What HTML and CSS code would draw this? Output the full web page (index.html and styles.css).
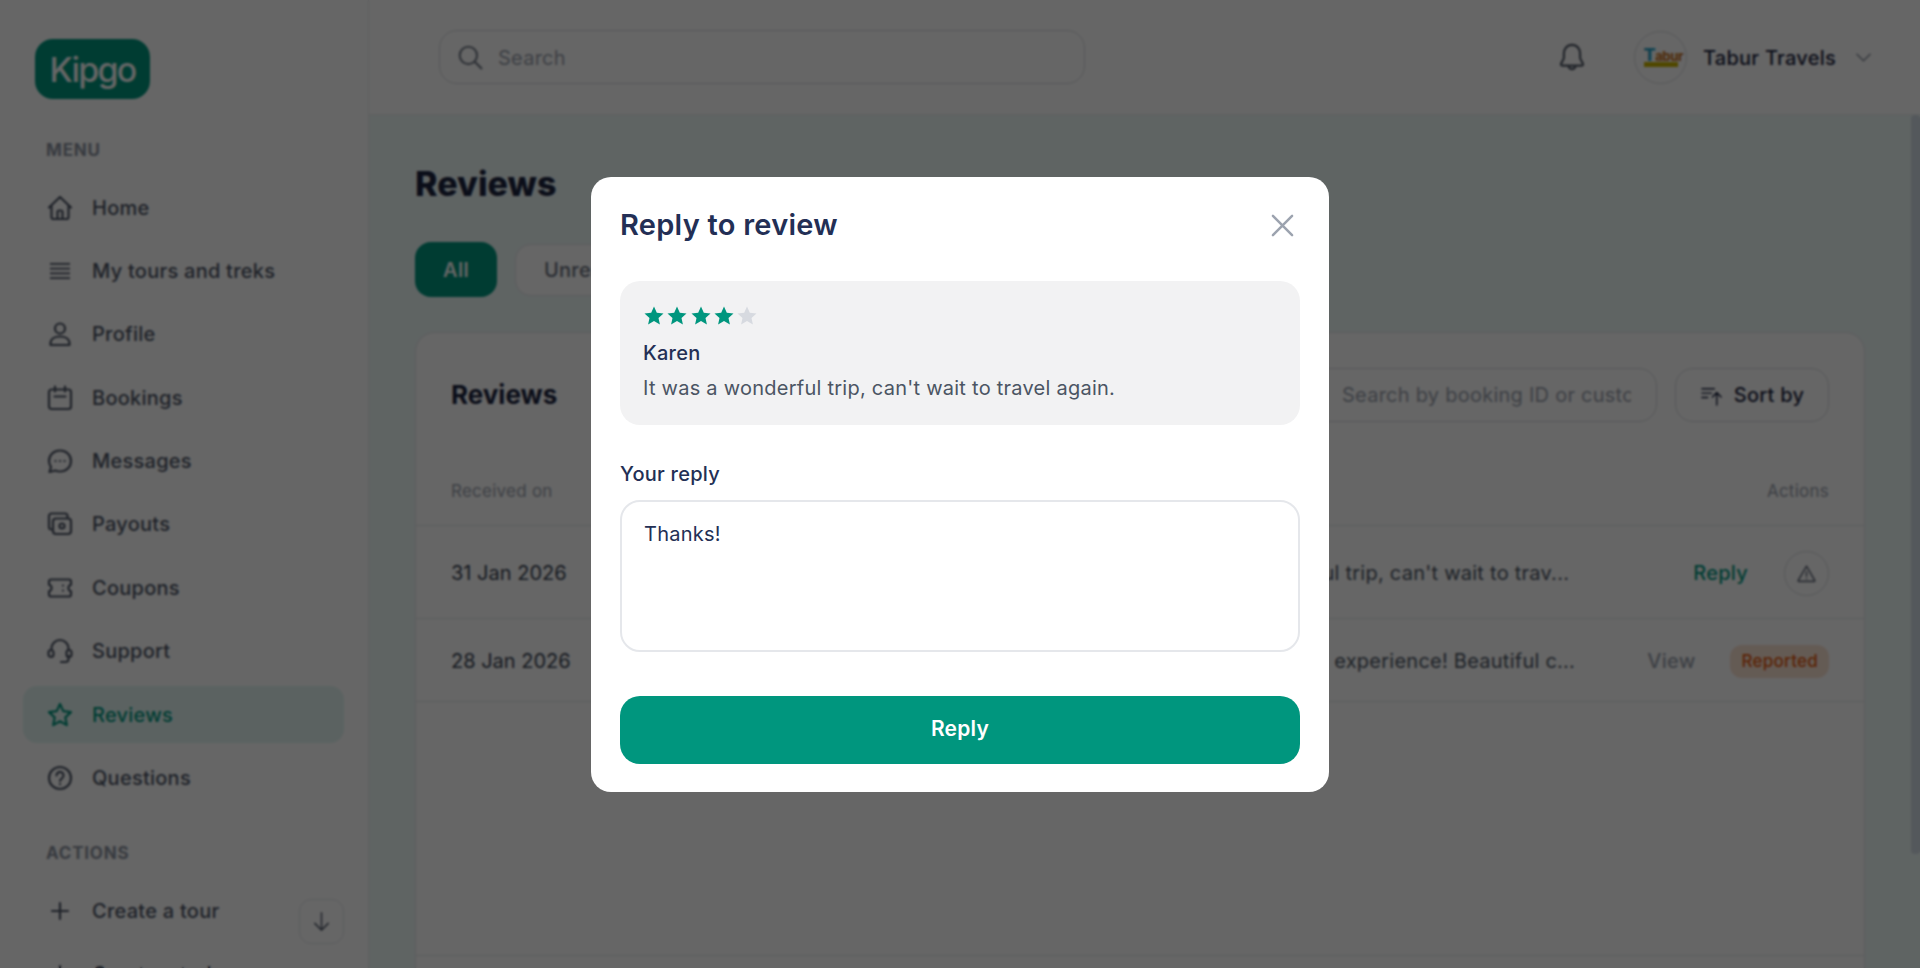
FILE: index.html
```html
<!DOCTYPE html>
<html lang="en">
<head>
  <meta charset="UTF-8" />
  <meta name="viewport" content="width=device-width, initial-scale=1.0"/>
  <title>Reviews</title>
  <link rel="stylesheet" href="styles.css">
</head>
<body>
  <aside class="sidebar">
    <div class="logo">Kipgo</div>

    <p class="rotulo rotulo-menu">MENU</p>
    <nav class="lista">
      <a class="item">
        <svg viewBox="0 0 26 26"><path d="M2 12.500 13 2l11 10.500M4.500 10.500V22a2 2 0 0 0 2 2h13a2 2 0 0 0 2-2V10.500M10.500 24v-7a1.500 1.500 0 0 1 1.500-1.500h2a1.500 1.500 0 0 1 1.500 1.500v7"/></svg>
        Home
      </a>
      <a class="item">
        <svg class="fino" viewBox="0 0 26 26"><path d="M3 5.800h20M3 10.600h20M3 15.400h20M3 20.200h20"/></svg>
        My tours and treks
      </a>
      <a class="item">
        <svg viewBox="0 0 26 26"><circle cx="13" cy="7.500" r="5"/><path d="M3.500 24v-1.500c0-4.500 4-7 9.500-7s9.500 2.500 9.500 7V24z"/></svg>
        Profile
      </a>
      <a class="item">
        <svg viewBox="0 0 26 26"><rect x="2" y="4.500" width="22" height="19.500" rx="2.500"/><path d="M8 1.500v5M18 1.500v5M7.500 11.500h11"/></svg>
        Bookings
      </a>
      <a class="item">
        <svg viewBox="0 0 26 26"><path d="M13 2.500c6.200 0 11 4.500 11 10.500s-4.800 10.500-11 10.500c-1.700 0-3.300-.3-4.700-1L2.500 24l1.500-5A10.400 10.400 0 0 1 2 13C2 7 6.800 2.500 13 2.500z"/><path d="M8.500 13h.1M13 13h.1M17.500 13h.1"/></svg>
        Messages
      </a>
      <a class="item">
        <svg viewBox="0 0 26 26"><path d="M4.500 18.500A2.500 2.500 0 0 1 2 16V5a2.500 2.500 0 0 1 2.500-2.500H18A2.500 2.500 0 0 1 20.500 5v2"/><rect x="6" y="7.500" width="18" height="15.500" rx="3"/><circle cx="15" cy="15" r="2.500"/></svg>
        Payouts
      </a>
      <a class="item">
        <svg viewBox="0 0 26 26"><path d="M4 4.500h18a2 2 0 0 1 2 2v3.200a3.400 3.400 0 0 0 0 6.600v3.200a2 2 0 0 1-2 2H4a2 2 0 0 1-2-2v-3.200a3.400 3.400 0 0 0 0-6.600V6.500a2 2 0 0 1 2-2z"/><path d="M16 10.500v.1M16 15.500v.1"/></svg>
        Coupons
      </a>
      <a class="item">
        <svg viewBox="0 0 26 26"><path d="M4.500 12V10.500a8.500 8.500 0 0 1 17 0V12M21.500 18v3a3 3 0 0 1-3 3H14"/><rect x="1.500" y="12" width="5" height="7" rx="2.500"/><rect x="19.500" y="12" width="5" height="7" rx="2.500"/></svg>
        Support
      </a>
      <a class="item item-ativo">
        <svg viewBox="0 0 26 26"><path d="m13 2 3.300 7.100 7.700 1-5.700 5.300 1.500 7.700-6.800-3.800-6.800 3.800 1.500-7.700L2 10.100l7.700-1z"/></svg>
        Reviews
      </a>
      <a class="item">
        <svg viewBox="0 0 26 26"><circle cx="13" cy="13" r="11"/><path d="M9.500 10.500a3.500 3.500 0 1 1 5.500 2.800c-1.200.8-2 1.500-2 2.700M13 19.200h.1"/></svg>
        Questions
      </a>
    </nav>

    <p class="rotulo rotulo-acoes">ACTIONS</p>
    <nav class="lista">
      <a class="item">
        <svg viewBox="0 0 26 26"><path d="M13 5v16M5 13h16"/></svg>
        Create a tour
      </a>
      <a class="item">
        <svg viewBox="0 0 26 26"><path d="M13 5v16M5 13h16"/></svg>
        Create a trek
      </a>
    </nav>

    <button class="rolar">
      <svg viewBox="0 0 24 24"><path d="M12 3v18M5 14l7 7 7-7"/></svg>
    </button>
  </aside>

  <div class="principal">
    <header class="topo">
      <div class="busca">
        <svg viewBox="0 0 24 24"><circle cx="10.500" cy="10.500" r="8"/><path d="m16.500 16.500 6 6"/></svg>
        <span>Search</span>
      </div>
      <svg class="sino" viewBox="0 0 26 26"><path d="M13 2.500c-4.500 0-7 3.500-7 7.500v3.500c0 2-2 3.500-2.500 5.500-.2.800.3 1.500 1.200 1.500h16.600c.9 0 1.400-.7 1.200-1.500-.5-2-2.500-3.500-2.500-5.500V10c0-4-2.500-7.500-7-7.500zM10 20.500a3 3 0 0 0 6 0"/></svg>
      <div class="avatar">
        <div class="avatar-logo">
          <span class="avatar-t">T</span><span class="avatar-nome">abur</span>
          <div class="avatar-faixa"></div>
        </div>
      </div>
      <span class="empresa">Tabur Travels</span>
      <svg class="seta" viewBox="0 0 16 9"><path d="m1 1 7 7 7-7"/></svg>
    </header>

    <div class="area">
      <main class="conteudo">
        <h1 class="titulo">Reviews</h1>
        <div class="abas">
          <button class="aba aba-ativa">All</button>
          <button class="aba">Unread</button>
        </div>

        <section class="cartao">
          <div class="cartao-topo">
            <h2>Reviews</h2>
            <div class="filtros">
              <div class="busca-tabela"><span>Search by booking ID or customer name</span></div>
              <button class="ordenar">
                <svg viewBox="0 0 24 24"><path d="M2 5h13M2 9.500h10M2 14h6M17.500 22V9M13 13.500 17.500 9l4.500 4.500"/></svg>
                Sort by
              </button>
            </div>
          </div>

          <div class="linha linha-titulo">
            <span>Received on</span>
            <span></span>
            <span class="fim">Actions</span>
          </div>
          <div class="linha linha-um">
            <span class="data">31 Jan 2026</span>
            <span class="mensagem">It was a wonderful trip, can't wait to trav...</span>
            <span class="acoes">
              <a class="responder">Reply</a>
              <button class="alerta">
                <svg viewBox="0 0 24 24"><path d="M12 3.500 2.500 20a.7.7 0 0 0 .6 1h17.800a.7.7 0 0 0 .6-1zM12 10v5M12 18h.1"/></svg>
              </button>
            </span>
          </div>
          <div class="linha linha-dois">
            <span class="data">28 Jan 2026</span>
            <span class="mensagem">What an amazing experience! Beautiful c...</span>
            <span class="acoes">
              <a class="ver">View</a>
              <span class="selo">Reported</span>
            </span>
          </div>
          <div class="rodape"></div>
        </section>
      </main>
      <div class="barra"><div class="polegar"></div></div>
    </div>
  </div>

  <div class="fundo">
    <div class="modal">
      <div class="modal-topo">
        <h3>Reply to review</h3>
        <svg class="fechar" viewBox="0 0 24 24"><path d="m2 2 20 20M22 2 2 22"/></svg>
      </div>

      <div class="avaliacao">
        <div class="estrelas">
          <svg viewBox="0 0 20 20"><path d="m10 .5 2.800 6.200 6.700.7-5 4.500 1.400 6.600L10 15.100l-5.900 3.400 1.400-6.600-5-4.500 6.700-.7z"/></svg>
          <svg viewBox="0 0 20 20"><path d="m10 .5 2.800 6.200 6.700.7-5 4.500 1.400 6.600L10 15.100l-5.900 3.400 1.400-6.600-5-4.500 6.700-.7z"/></svg>
          <svg viewBox="0 0 20 20"><path d="m10 .5 2.800 6.200 6.700.7-5 4.500 1.400 6.600L10 15.100l-5.900 3.400 1.400-6.600-5-4.500 6.700-.7z"/></svg>
          <svg viewBox="0 0 20 20"><path d="m10 .5 2.800 6.200 6.700.7-5 4.500 1.400 6.600L10 15.100l-5.900 3.400 1.400-6.600-5-4.500 6.700-.7z"/></svg>
          <svg class="apagada" viewBox="0 0 20 20"><path d="m10 .5 2.800 6.200 6.700.7-5 4.500 1.400 6.600L10 15.100l-5.900 3.400 1.400-6.600-5-4.500 6.700-.7z"/></svg>
        </div>
        <p class="autor">Karen</p>
        <p class="texto">It was a wonderful trip, can't wait to travel again.</p>
      </div>

      <label class="legenda">Your reply</label>
      <div class="resposta">Thanks!</div>
      <button class="enviar">Reply</button>
    </div>
  </div>
</body>
</html>
```

FILE: styles.css
```css
* {
  box-sizing: border-box;
}

html, body {
  height: 100%;
}

body {
  margin: 0;
  display: flex;
  overflow: hidden;
  background: white;
  font-family: "Inter", "Liberation Sans", sans-serif;
  font-size: 20px;
  letter-spacing: .25px;
  color: #1f2937;
}

p, h1, h2, h3 {
  margin: 0;
}

button {
  font-family: inherit;
  font-size: inherit;
  letter-spacing: inherit;
  background: none;
}

/* MENU LATERAL */
.sidebar {
  position: relative;
  flex: none;
  width: 369px;
  height: 100%;
  padding: 39px 24px 0 23px;
  border-right: 1px solid #eceeef;
  overflow: hidden;
}

.logo {
  width: 115px;
  height: 60px;
  margin-left: 12px;
  display: flex;
  justify-content: center;
  align-items: center;
  background: #00967e;
  border-radius: 18px;
  color: white;
  font-size: 34px;
  font-weight: 500;
  letter-spacing: -1.800px;
}

.rotulo {
  margin-left: 23px;
  height: 20px;
  line-height: 20px;
  font-size: 17px;
  font-weight: 700;
  letter-spacing: .8px;
  color: #8c93a0;
}

.rotulo-menu {
  margin-top: 41px;
  margin-bottom: 19px;
}

.rotulo-acoes {
  margin-top: 36px;
  margin-bottom: 20px;
}

.lista {
  display: flex;
  flex-direction: column;
  gap: 6.4px;
}

.item {
  height: 57px;
  padding-left: 24px;
  display: flex;
  align-items: center;
  gap: 19px;
  border-radius: 14px;
  font-weight: 500;
  color: #4d5566;
}

.item svg {
  flex: none;
  width: 26px;
  height: 26px;
  fill: none;
  stroke: currentColor;
  stroke-width: 2.200;
  stroke-linecap: round;
  stroke-linejoin: round;
}

.item .fino {
  stroke-width: 1.800;
  stroke-linecap: butt;
}

.item-ativo {
  background: #e3f6f3;
  color: #00967e;
}

.rolar {
  position: absolute;
  left: 299px;
  top: 899px;
  width: 45px;
  height: 45px;
  padding: 10px;
  display: flex;
  background: white;
  border: 1.5px solid #e5e7eb;
  border-radius: 12px;
}

.rolar svg {
  fill: none;
  stroke: #5a6272;
  stroke-width: 1.600;
  stroke-linecap: round;
  stroke-linejoin: round;
}

/* TOPO */
.principal {
  flex: 1;
  min-width: 0;
  display: flex;
  flex-direction: column;
}

.topo {
  flex: none;
  height: 115px;
  padding-left: 70px;
  display: flex;
  align-items: center;
  border-bottom: 1.500px solid #eceeef;
}

.busca {
  width: 646px;
  height: 54px;
  padding-left: 17px;
  display: flex;
  align-items: center;
  gap: 15px;
  border: 1.500px solid #d9dce0;
  border-radius: 18px;
  color: #9aa1ad;
}

.busca span {
  padding-top: 2px;
}

.busca svg {
  width: 26px;
  height: 26px;
  fill: none;
  stroke: #7a818d;
  stroke-width: 2;
  stroke-linecap: round;
}

.sino {
  width: 30px;
  height: 30px;
  margin-left: 472px;
  fill: none;
  stroke: #525a68;
  stroke-width: 1.900;
  stroke-linejoin: round;
  stroke-linecap: round;
}

.avatar {
  width: 53px;
  height: 53px;
  margin-left: 47px;
  display: flex;
  justify-content: center;
  align-items: center;
  border: 1.500px solid #d9dce0;
  border-radius: 50%;
}

.avatar-logo {
  width: 34px;
  font-size: 13px;
  font-weight: 800;
  line-height: 13px;
  letter-spacing: -.5px;
  white-space: nowrap;
}

.avatar-t {
  font-size: 18px;
  color: #2aa5c9;
}

.avatar-nome {
  color: #c9782a;
}

.avatar-faixa {
  height: 5px;
  background: #c9b300;
  margin-top: -1px;
}

.empresa {
  margin-left: 16px;
  padding-top: 2px;
  font-weight: 500;
  color: #1d2540;
}

.seta {
  width: 15px;
  height: 9px;
  margin-left: 20px;
  fill: none;
  stroke: #8c93a0;
  stroke-width: 1.600;
  stroke-linecap: round;
  stroke-linejoin: round;
}

/* CONTEUDO */
.area {
  flex: 1;
  min-height: 0;
  display: flex;
  background: #eef9f8;
}

.conteudo {
  flex: 1;
  min-width: 0;
  padding: 47px 46px 0;
}

.titulo {
  height: 44px;
  line-height: 44px;
  font-size: 34px;
  font-weight: 800;
  letter-spacing: 0;
  color: #1d2540;
}

.abas {
  margin-top: 36px;
  display: flex;
  align-items: center;
  gap: 18px;
}

.aba {
  height: 52px;
  padding: 0 28px;
  background: white;
  border: 1.500px solid #e5e7eb;
  border-radius: 16px;
  font-weight: 500;
  color: #6b7280;
}

.aba-ativa {
  width: 82px;
  height: 55px;
  padding: 0;
  background: #00967e;
  border: none;
  color: white;
  font-weight: 600;
}

.cartao {
  height: 700px;
  margin-top: 35px;
  background: white;
  border: 1.500px solid #e5e7eb;
  border-radius: 20px;
}

.cartao-topo {
  height: 118px;
  padding: 35px 35px 0;
  display: flex;
  justify-content: space-between;
}

.cartao-topo h2 {
  height: 54px;
  line-height: 54px;
  font-size: 26px;
  font-weight: 700;
  letter-spacing: 0;
  color: #1d2540;
}

.filtros {
  display: flex;
  gap: 18px;
}

.busca-tabela {
  width: 480px;
  height: 54px;
  padding: 0 25px 0 164px;
  display: flex;
  align-items: center;
  border: 1.500px solid #d9dce0;
  border-radius: 18px;
  color: #9aa1ad;
}

.busca-tabela span {
  overflow: hidden;
  white-space: nowrap;
}

.ordenar {
  width: 154px;
  height: 54px;
  display: flex;
  justify-content: center;
  align-items: center;
  gap: 11px;
  border: 1.500px solid #d9dce0;
  border-radius: 18px;
  font-weight: 500;
  color: #1d2540;
}

.ordenar svg {
  width: 23px;
  height: 23px;
  fill: none;
  stroke: #1d2540;
  stroke-width: 1.500;
  stroke-linecap: round;
  stroke-linejoin: round;
}

.linha {
  display: grid;
  grid-template-columns: 200px 1fr auto;
  align-items: center;
  padding: 0 35px;
  border-bottom: 1.500px solid #e5e7eb;
}

.linha-titulo {
  height: 75px;
  padding-top: 6px;
  font-size: 17px;
  color: #9aa1ad;
}

.linha-um {
  height: 93px;
  padding-top: 2px;
}

.linha-dois {
  height: 83px;
  padding-top: 2px;
}

.rodape {
  height: 30px;
  margin-top: 253px;
  border-top: 1.500px solid #e5e7eb;
}

.data {
  letter-spacing: 0;
  color: #374151;
}

.mensagem {
  padding-left: 510px;
  white-space: nowrap;
  color: #4b5563;
}

.acoes {
  display: flex;
  align-items: center;
}

.responder {
  font-weight: 500;
  color: #00967e;
}

.alerta {
  width: 45px;
  height: 45px;
  margin-left: 36px;
  padding: 11px;
  display: flex;
  border: 1.500px solid #d9dce0;
  border-radius: 50%;
}

.alerta svg {
  fill: none;
  stroke: #6b7280;
  stroke-width: 1.800;
  stroke-linejoin: round;
  stroke-linecap: round;
}

.ver {
  color: #9aa1ad;
  font-weight: 500;
}

.selo {
  height: 33px;
  margin-left: 35px;
  padding: 0 11px;
  display: flex;
  align-items: center;
  background: #fbe3d3;
  border-radius: 12px;
  font-size: 17px;
  font-weight: 500;
  color: #e2570b;
}

/* BARRA DE ROLAGEM */
.barra {
  flex: none;
  width: 9px;
}

.polegar {
  height: 739px;
  background: #d3dde6;
  border-radius: 4px;
}

/* MODAL */
.fundo {
  position: fixed;
  inset: 0;
  display: flex;
  justify-content: center;
  align-items: center;
  background: rgba(0, 0, 0, .6);
  backdrop-filter: blur(1px);
}

.modal {
  width: 738px;
  height: 615px;
  padding: 30px 29px 0;
  display: flex;
  flex-direction: column;
  background: white;
  border-radius: 20px;
  color: #232f55;
}

.modal-topo {
  height: 38px;
  display: flex;
  justify-content: space-between;
  align-items: center;
}

.modal-topo h3 {
  padding-bottom: 2px;
  font-size: 29px;
  font-weight: 600;
  letter-spacing: .25px;
}

.fechar {
  width: 23px;
  height: 23px;
  margin-right: 6px;
  fill: none;
  stroke: #9ca3af;
  stroke-width: 2.600;
  stroke-linecap: round;
}

.avaliacao {
  flex: none;
  height: 144px;
  margin-top: 36.5px;
  padding: 25px 24px;
  background: #f2f2f3;
  border-radius: 20px;
}

.estrelas {
  display: flex;
  gap: 3.300px;
}

.estrelas svg {
  width: 20px;
  height: 20px;
  fill: #00967e;
}

.estrelas .apagada {
  fill: #d7dae0;
}

.autor {
  margin-top: 14px;
  height: 26px;
  line-height: 26px;
  font-weight: 500;
  margin-left: -1px;
}

.texto {
  margin-top: 9px;
  height: 26px;
  line-height: 26px;
  margin-left: -1px;
  color: #4b5563;
}

.legenda {
  margin-top: 36px;
  height: 26px;
  line-height: 26px;
  font-weight: 500;
}

.resposta {
  flex: none;
  height: 152px;
  margin-top: 13px;
  padding: 20px 22px;
  border: 2px solid #e5e7eb;
  border-radius: 20px;
}

.enviar {
  flex: none;
  height: 68px;
  margin-top: 44px;
  padding-bottom: 4px;
  background: #00967e;
  border: none;
  border-radius: 20px;
  color: white;
  font-size: 21px;
  font-weight: 600;
}
```
